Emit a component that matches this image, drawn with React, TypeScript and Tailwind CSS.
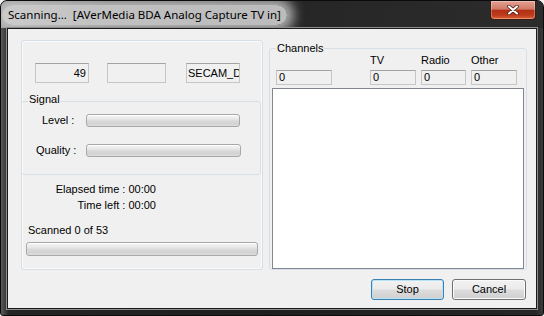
import React from "react";

const ui = { fontFamily: '"Liberation Sans", Arial, sans-serif' };
const titleFont = { fontFamily: '"Noto Sans", "Open Sans", sans-serif' };

const field = "border border-[#c6c6c6] border-t-[#a3a3a3] bg-[#f0f0f0] text-[11px] text-black overflow-hidden whitespace-nowrap";
const bar =
  "rounded-[3px] border border-[#a8a8a8] bg-[linear-gradient(180deg,#f5f5f5_0%,#e8e8e8_35%,#d9d9d9_55%,#d3d3d3_80%,#dedede_100%)] shadow-[inset_0_1px_0_#fff]";
const btn =
  "h-[21px] rounded-[3px] border text-[11px] leading-[19px] text-black text-center bg-[linear-gradient(180deg,#f2f2f2_0%,#ebebeb_48%,#dddddd_52%,#cfcfcf_100%)]";

function CloseButton() {
  return (
    <div className="mr-[7px] flex h-[19px] w-[46px] items-center justify-center rounded-b-[4px] border border-t-0 border-[#3a1a14] bg-[linear-gradient(180deg,#e3a193_0%,#d07a66_45%,#b42f16_52%,#bd3a1b_78%,#dc6238_100%)] shadow-[inset_0_0_0_1px_rgba(255,255,255,0.3)]">
      <svg width="12" height="10" viewBox="0 0 12 10">
        <path d="M2 1.5 L10 8.5 M10 1.5 L2 8.5" stroke="#4a1d14" strokeWidth="3.6" strokeLinecap="round" />
        <path d="M2 1.5 L10 8.5 M10 1.5 L2 8.5" stroke="#fff" strokeWidth="2.1" strokeLinecap="round" />
      </svg>
    </div>
  );
}

function TitleBar() {
  return (
    <div className="flex h-[27px] items-start justify-between bg-[linear-gradient(90deg,#8a8a8a_0%,#4a4a4a_20%,#262626_55%,#2c2c2c_100%)]">
      <div className="mt-[4px] pl-[1px]">
        <span
          className="block rounded-[10px] bg-[rgba(214,214,214,0.85)] px-[6px] py-[2px] text-[11.5px] leading-[16px] whitespace-pre text-black shadow-[0_0_12px_7px_rgba(210,210,210,0.8)]"
          style={titleFont}
        >
          {"Scanning...  [AVerMedia BDA Analog Capture TV in]"}
        </span>
      </div>
      <CloseButton />
    </div>
  );
}

function LeftPanel() {
  return (
    <div className="flex h-[230px] w-[242px] flex-col rounded-[3px] border border-[#d5dfe5] shadow-[inset_0_0_0_1px_#fafafa]">
      <div className="flex pt-[22px] pl-[13px]">
        <div className={`${field} h-[20px] w-[54px] pr-[2px] text-right leading-[18px]`}>49</div>
        <div className={`${field} ml-[18px] h-[20px] w-[59px]`} />
        <div className={`${field} ml-[20px] h-[20px] w-[54px] pl-[1px] leading-[18px]`}>SECAM_D</div>
      </div>

      <fieldset className="-ml-px mt-[10px] flex h-[82px] w-[240px] flex-col rounded-[3px] border border-[#d5dfe5]">
        <legend className="ml-[6px] px-[1px] pb-[3px] text-[11px] leading-[13px] text-black">Signal</legend>
        <div className="mt-[5px] flex h-[13px] items-center">
          <span className="w-[64px] pl-[20px] text-[11px] leading-[13px] text-black">Level :</span>
          <div className={`${bar} h-[13px] w-[154px]`} />
        </div>
        <div className="mt-[17px] flex h-[13px] items-center">
          <span className="w-[64px] pl-[14px] text-[11px] leading-[13px] text-black">Quality :</span>
          <div className={`${bar} h-[13px] w-[155px]`} />
        </div>
      </fieldset>

      <div className="flex flex-col">
        <div className="mt-[6px] flex w-[134px] flex-col items-end text-[11px] leading-[16px] text-black">
          <span>Elapsed time : 00:00</span>
          <span>Time left : 00:00</span>
        </div>
        <span className="mt-[11px] pl-[6px] text-[11px] leading-[13px] text-black">Scanned 0 of 53</span>
        <div className={`${bar} mt-[5px] ml-[4px] h-[14px] w-[232px]`} />
      </div>
    </div>
  );
}

function ChannelsPanel() {
  const cols = [
    { label: "TV", w: "w-[46px]", ml: "ml-[38px]" },
    { label: "Radio", w: "w-[45px]", ml: "ml-[5px]" },
    { label: "Other", w: "w-[46px]", ml: "ml-[5px]" },
  ];
  return (
    <fieldset className="mt-[2px] flex h-[228px] w-[258px] flex-col rounded-[3px] border border-[#d5dfe5]">
      <legend className="ml-[6px] px-[1px] text-[11px] leading-[12px] text-black">Channels</legend>
      <div className="flex pl-[6px]">
        <div className="flex w-[56px] flex-col">
          <span className="h-[13px]" />
          <div className={`${field} mt-[3px] h-[15px] w-[56px] pl-[2px] leading-[13px]`}>0</div>
        </div>
        {cols.map((c) => (
          <div key={c.label} className={`flex flex-col ${c.ml} ${c.w}`}>
            <span className="h-[13px] text-[11px] leading-[13px] text-black">{c.label}</span>
            <div className={`${field} mt-[3px] h-[15px] ${c.w} pl-[2px] leading-[13px]`}>0</div>
          </div>
        ))}
      </div>
      <div className="mt-[3px] ml-[2px] w-[252px] flex-1 border border-[#828790] bg-white" />
    </fieldset>
  );
}

export default function App() {
  return (
    <div className="h-[316px] w-[544px] bg-[#f0f0f0]" style={ui}>
      <div className="flex h-full w-full flex-col overflow-hidden rounded-t-[7px] rounded-b-[3px] border border-[#0b0b0b] bg-[linear-gradient(180deg,#3a3a3a_0%,#262626_30%,#1c1c1c_80%,#2a2a2a_100%)]">
        <TitleBar />
        <div className="flex flex-1 px-[6px] pb-[6px] bg-[linear-gradient(90deg,#5a5a5a_0%,#242424_1.5%,#1e1e1e_50%,#262626_98.5%,#3a3a3a_100%)]">
          <div className="flex flex-1 flex-col border border-[#1a1a1a] bg-[#f0f0f0] pt-[11px] pr-[9px] pl-[13px] shadow-[0_0_0_1px_#8f8f8f]">
            <div className="flex items-start gap-[6px]">
              <LeftPanel />
              <ChannelsPanel />
            </div>
            <div className="mt-[9px] flex justify-end gap-[8px] pr-[1px]">
              <div className={`${btn} w-[73px] border-[#3c7fb1] shadow-[inset_0_0_0_1px_#b9e4f8]`}>Stop</div>
              <div className={`${btn} w-[74px] border-[#707070] shadow-[inset_0_0_0_1px_#fbfbfb]`}>Cancel</div>
            </div>
          </div>
        </div>
      </div>
    </div>
  );
}
